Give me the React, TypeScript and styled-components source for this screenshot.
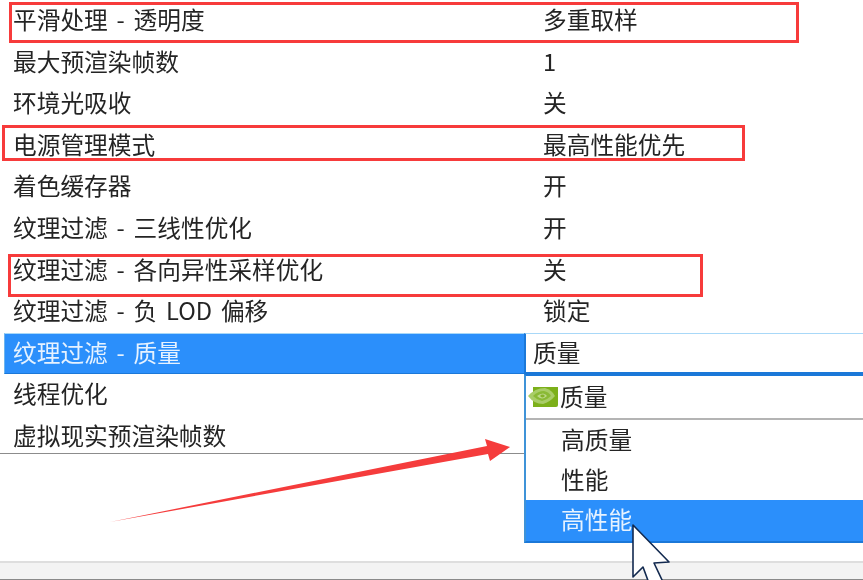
import React from 'react';
import styled, { createGlobalStyle } from 'styled-components';

type Setting = {
  name: string;
  value?: string;
  active?: boolean;
}

const settings: Setting[] = [
  { name: '平滑处理 - 透明度', value: '多重取样' },
  { name: '最大预渲染帧数', value: '1' },
  { name: '环境光吸收', value: '关' },
  { name: '电源管理模式', value: '最高性能优先' },
  { name: '着色缓存器', value: '开' },
  { name: '纹理过滤 - 三线性优化', value: '开' },
  { name: '纹理过滤 - 各向异性采样优化', value: '关' },
  { name: '纹理过滤 - 负 LOD 偏移', value: '锁定' },
  { name: '纹理过滤 - 质量', value: '质量', active: true },
  { name: '线程优化' },
  { name: '虚拟现实预渲染帧数' },
];

const GlobalStyle = createGlobalStyle`
  html, body {
    margin: 0;
    padding: 0;
    background: #fff;
  }
  body {
    font-family: "Noto Sans CJK SC", "Noto Sans", sans-serif;
    font-size: 23.7px;
    word-spacing: 3.5px;
    color: #242424;
  }
`;

const Page = styled.div`
  position: relative;
  display: flex;
  flex-direction: column;
  width: 863px;
  height: 580px;
  overflow: hidden;
  background: #fff;
`;

const Blurred = styled.div`
  display: flex;
  flex-direction: column;
  height: 100%;
  filter: blur(0.5px);
`;

const List = styled.div`
  height: 453px;
  border-bottom: 1px solid #8c8c8c;
  overflow: hidden;
  flex-shrink: 0;
`;

const Row = styled.div`
  display: grid;
  grid-template-columns: 530px 1fr;
  height: 41.6px;
  line-height: 38px;
  padding-left: 13px;
  white-space: nowrap;
`;

const ActiveRow = styled.div`
  display: grid;
  grid-template-columns: 519px 1fr;
  height: 41.6px;
  padding-left: 5px;
  white-space: nowrap;
`;

const ActiveLabel = styled.div`
  padding-left: 8px;
  background: #2b8ffb;
  color: #e6f2ff;
  border-top: 1px solid #a8d8f8;
  border-bottom: 1px solid #1b78d8;
  border-left: 1px solid #6db4ee;
  line-height: 36px;
  margin-left: -1px;
`;

const SelectBox = styled.div`
  padding-left: 7px;
  background: #fff;
  border-top: 1px solid #a8d8f8;
  border-bottom: 2px solid #1b78d8;
  border-left: 2px solid #1b78d8;
  line-height: 36px;
`;

const Footer = styled.div`
  margin-top: auto;
  height: 16px;
  background: #f3f3f3;
  border-top: 2px solid #dedede;
  border-bottom: 1px solid #8a8a8a;
`;

const Popup = styled.div`
  position: absolute;
  left: 524px;
  top: 374px;
  width: 339px;
  height: 169px;
  display: flex;
  flex-direction: column;
  background: #fff;
  border-left: 2px solid #3f93d8;
  border-top: 2px solid #1b78d8;
  border-bottom: 2px solid #1b78d8;
  box-sizing: border-box;
`;

const PopupHead = styled.div`
  display: flex;
  align-items: center;
  gap: 2px;
  height: 42px;
  padding-left: 2px;
  border-bottom: 2px solid #b4b4b4;
  flex-shrink: 0;
  line-height: 38px;
`;

const HeadText = styled.span`
  position: relative;
  top: -1px;
`;

const PopupItem = styled.div<{ $selected?: boolean }>`
  height: ${p => (p.$selected ? '41px' : '40px')};
  line-height: ${p => (p.$selected ? '39px' : '38px')};
  padding-left: 35px;
  background: ${p => (p.$selected ? '#2b8ffb' : 'transparent')};
  color: ${p => (p.$selected ? '#e6f2ff' : 'inherit')};
`;

const Mark = styled.div<{ $left: number; $top: number; $width: number; $height: number }>`
  position: absolute;
  left: ${p => p.$left}px;
  top: ${p => p.$top}px;
  width: ${p => p.$width}px;
  height: ${p => p.$height}px;
  border: 3px solid #f73b3b;
  box-sizing: border-box;
`;

const Overlay = styled.svg`
  position: absolute;
  left: 0;
  top: 0;
  pointer-events: none;
`;

const NvidiaLogo = () => (
  <svg width="30" height="20" viewBox="0 0 30 20">
    <path d="M5 0H30V18Q30 20 28 20H5Z" fill="#7cb01a" />
    <path d="M0 9Q7 1 17 1Q24 3 27 9Q22 15 15 17Q6 17 0 9Z" fill="#a9cd68" />
    <path d="M5 9Q10 4 16 4Q21 5 23 9Q19 13 14 14Q9 13 5 9Z" fill="#8aba36" />
    <path d="M9 9Q12 6.5 15 6.5Q18 7 19 9Q16 11.5 14 11.5Q11 11 9 9Z" fill="#bcd88a" />
    <ellipse cx="14.5" cy="9" rx="2.2" ry="1.4" fill="#84b32a" />
  </svg>
);

const App = () => (
  <Page>
    <GlobalStyle />
    <Blurred>
      <List>
        {settings.map(s => (
          s.active ? (
            <ActiveRow key={s.name}>
              <ActiveLabel>{s.name}</ActiveLabel>
              <SelectBox>{s.value}</SelectBox>
            </ActiveRow>
          ) : (
            <Row key={s.name}>
              <span>{s.name}</span>
              <span>{s.value}</span>
            </Row>
          )
        ))}
      </List>
      <Footer />
      <Popup>
        <PopupHead>
          <NvidiaLogo />
          <HeadText>质量</HeadText>
        </PopupHead>
        <PopupItem>高质量</PopupItem>
        <PopupItem>性能</PopupItem>
        <PopupItem $selected>高性能</PopupItem>
      </Popup>
    </Blurred>
    <Mark $left={9} $top={2} $width={790} $height={41} />
    <Mark $left={2} $top={125} $width={743} $height={36} />
    <Mark $left={8} $top={254} $width={695} $height={43} />
    <Overlay width="863" height="580" viewBox="0 0 863 580">
      <polygon points="110,522 487,446 485,439 510,447 490,461 488,454" fill="#f53c3c" />
      <polygon
        points="633,525 669,562 654,563 663,582 650,586 643,567 633,577"
        fill="#fff"
        stroke="#12294f"
        strokeWidth="1.6"
        strokeLinejoin="round"
      />
    </Overlay>
  </Page>
);

export default App;
